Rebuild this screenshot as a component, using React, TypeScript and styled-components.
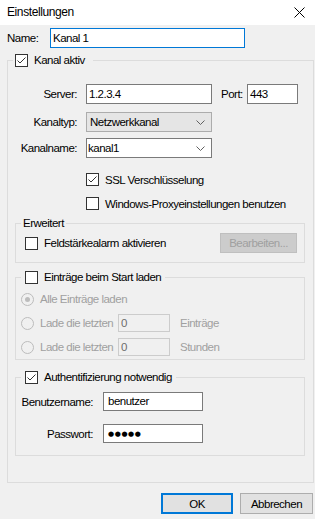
import type { FC, ReactNode } from 'react'
import styled, { createGlobalStyle } from 'styled-components'

const GlobalStyle = createGlobalStyle`
  html, body {
    margin: 0;
    padding: 0;
    background: #f0f0f0;
  }

  body {
    color: #000;
    font-family: 'Liberation Sans', Arial, sans-serif;
    font-size: 11.5px;
    letter-spacing: -0.5px;
  }

  * {
    box-sizing: border-box;
  }
`

const Window = styled.div`
  background: #f0f0f0;
  display: flex;
  flex-direction: column;
  height: 519px;
  overflow: hidden;
  width: 315px;
`

const TitleBar = styled.div`
  align-items: center;
  background: #fff;
  display: flex;
  height: 25px;
  justify-content: space-between;
  padding: 0 10px 1px 7px;
`

const Title = styled.span`
  font-size: 12px;
  letter-spacing: -0.4px;
`

const Body = styled.div`
  display: flex;
  flex-direction: column;
  padding: 3px 1px 0 7px;
`

const Row = styled.div<{ $mt?: number; $pl?: number; $h?: number }>`
  align-items: center;
  display: flex;
  height: ${({ $h }) => $h ?? 20}px;
  margin-top: ${({ $mt }) => $mt ?? 0}px;
  padding-left: ${({ $pl }) => $pl ?? 0}px;
`

const Label = styled.span<{ $w: number; $pl?: number; $pr?: number; $right?: boolean; $disabled?: boolean }>`
  color: ${({ $disabled }) => ($disabled ? '#a0a0a0' : '#000')};
  flex: none;
  padding-left: ${({ $pl }) => $pl ?? 0}px;
  padding-right: ${({ $pr }) => $pr ?? 0}px;
  text-align: ${({ $right }) => ($right ? 'right' : 'left')};
  white-space: nowrap;
  width: ${({ $w }) => $w}px;
`

const TextField = styled.div<{ $w: number; $h?: number; $focused?: boolean; $disabled?: boolean; $pl?: number }>`
  background: ${({ $disabled }) => ($disabled ? '#f0f0f0' : '#fff')};
  border: 1px solid
    ${({ $focused, $disabled }) => ($focused ? '#0078d7' : $disabled ? '#cccccc' : '#7a7a7a')};
  color: ${({ $disabled }) => ($disabled ? '#6d6d6d' : '#000')};
  flex: none;
  height: ${({ $h }) => $h ?? 20}px;
  line-height: ${({ $h }) => ($h ?? 20) - 2}px;
  padding-left: ${({ $pl }) => $pl ?? 2}px;
  white-space: nowrap;
  width: ${({ $w }) => $w}px;
`

const ComboBox = styled.div<{ $editable?: boolean }>`
  align-items: center;
  background: ${({ $editable }) => ($editable ? '#fff' : '#e5e5e5')};
  border: 1px solid ${({ $editable }) => ($editable ? '#7a7a7a' : '#acacac')};
  display: flex;
  flex: none;
  height: 20px;
  justify-content: space-between;
  padding: 0 6px 0 ${({ $editable }) => ($editable ? 1 : 3)}px;
  width: 126px;
`

const Group = styled.fieldset<{ $mt: number; $pad: string }>`
  border: 1px solid #dcdcdc;
  margin: ${({ $mt }) => $mt}px 0 0;
  min-width: 0;
  padding: ${({ $pad }) => $pad};
`

const Legend = styled.legend<{ $ml: number; $pad: string }>`
  height: 15px;
  line-height: 15px;
  margin-left: ${({ $ml }) => $ml}px;
  padding: ${({ $pad }) => $pad};
`

const CheckLabel = styled.span`
  align-items: center;
  display: inline-flex;
  gap: 6px;
  height: 15px;
  white-space: nowrap;
`

const Box = styled.span`
  align-items: center;
  background: #fff;
  border: 1px solid #333;
  display: inline-flex;
  flex: none;
  height: 13px;
  justify-content: center;
  width: 13px;
`

const RadioCircle = styled.span<{ $on?: boolean }>`
  align-items: center;
  background: #f0f0f0;
  border: 1px solid #bcbcbc;
  border-radius: 50%;
  display: inline-flex;
  flex: none;
  height: 13px;
  justify-content: center;
  width: 13px;

  &::after {
    background: #bcbcbc;
    border-radius: 50%;
    content: '';
    display: ${({ $on }) => ($on ? 'block' : 'none')};
    height: 5px;
    width: 5px;
  }
`

const RadioList = styled.div`
  display: flex;
  flex-direction: column;
  gap: 6px;
`

const RadioRow = styled.div`
  align-items: center;
  color: #a0a0a0;
  display: flex;
  gap: 6px;
  height: 18px;
  margin-left: -4px;
  white-space: nowrap;
`

const SpreadRow = styled.div`
  align-items: center;
  display: flex;
  height: 20px;
  justify-content: space-between;
`

const LoginGrid = styled.div`
  align-items: center;
  column-gap: 8px;
  display: grid;
  grid-template-columns: 70px 100px;
  grid-auto-rows: 19px;
  row-gap: 13px;
`

const GridLabel = styled.span`
  justify-self: end;
  padding-right: 2px;
  white-space: nowrap;
`

const Dots = styled.span`
  font-family: 'DejaVu Sans', sans-serif;
  font-size: 7px;
  letter-spacing: 0.6px;
  position: relative;
  top: -1px;
`

const Button = styled.div<{ $w: number; $default?: boolean; $disabled?: boolean }>`
  align-items: center;
  background: ${({ $disabled }) => ($disabled ? '#cccccc' : '#e1e1e1')};
  border: ${({ $default }) => ($default ? '2px solid #0078d7' : '1px solid #adadad')};
  border-color: ${({ $disabled, $default }) => ($disabled ? '#bfbfbf' : $default ? '#0078d7' : '#adadad')};
  color: ${({ $disabled }) => ($disabled ? '#a0a0a0' : '#000')};
  display: flex;
  flex: none;
  height: ${({ $disabled }) => ($disabled ? 20 : 21)}px;
  justify-content: center;
  width: ${({ $w }) => $w}px;
`

const ButtonBar = styled.div`
  display: flex;
  gap: 7px;
  justify-content: flex-end;
  margin-top: 10px;
  padding-right: 1px;
`

const Chevron = () => (
  <svg width="9" height="5" viewBox="0 0 9 5">
    <polyline points="0.5,0.5 4.5,4.5 8.5,0.5" fill="none" stroke="#606060" strokeWidth="1" />
  </svg>
)

const CloseIcon = () => (
  <svg width="11" height="11" viewBox="0 0 11 11">
    <path d="M0.5 0.5 L10.5 10.5 M10.5 0.5 L0.5 10.5" stroke="#000" strokeWidth="1" />
  </svg>
)

const Checkbox: FC<{ checked?: boolean; children: ReactNode }> = ({ checked, children }) => (
  <CheckLabel>
    <Box>
      {checked && (
        <svg width="11" height="11" viewBox="0 0 11 11">
          <polyline points="1.5,5.5 4,8 9.5,2.5" fill="none" stroke="#333" strokeWidth="1" />
        </svg>
      )}
    </Box>
    <span>{children}</span>
  </CheckLabel>
)

const App: FC = () => {
  return (
    <Window>
      <GlobalStyle />
      <TitleBar>
        <Title>Einstellungen</Title>
        <CloseIcon />
      </TitleBar>
      <Body>
        <Row>
          <Label $w={43}>Name:</Label>
          <TextField $w={195} $focused>
            Kanal 1
          </TextField>
        </Row>

        <Group $mt={5} $pad="16px 8px 26px 7px">
          <Legend $ml={-2} $pad="0 8px 0 2px">
            <Checkbox checked>Kanal aktiv</Checkbox>
          </Legend>

          <Row>
            <Label $w={71} $pr={9} $right>
              Server:
            </Label>
            <TextField $w={126}>1.2.3.4</TextField>
            <Label $w={35} $pl={9}>
              Port:
            </Label>
            <TextField $w={51}>443</TextField>
          </Row>
          <Row $mt={8}>
            <Label $w={71} $pr={9} $right>
              Kanaltyp:
            </Label>
            <ComboBox>
              <span>Netzwerkkanal</span>
              <Chevron />
            </ComboBox>
          </Row>
          <Row $mt={6}>
            <Label $w={71} $pr={9} $right>
              Kanalname:
            </Label>
            <ComboBox $editable>
              <span>kanal1</span>
              <Chevron />
            </ComboBox>
          </Row>
          <Row $mt={14} $h={15} $pl={71}>
            <Checkbox checked>SSL Verschlüsselung</Checkbox>
          </Row>
          <Row $mt={9} $h={15} $pl={71}>
            <Checkbox>Windows-Proxyeinstellungen benutzen</Checkbox>
          </Row>

          <Group $mt={5} $pad="2px 7px 9px 9px">
            <Legend $ml={-4} $pad="0 2px">
              Erweitert
            </Legend>
            <SpreadRow>
              <Checkbox>Feldstärkealarm aktivieren</Checkbox>
              <Button $w={77} $disabled>
                Bearbeiten...
              </Button>
            </SpreadRow>
          </Group>

          <Group $mt={7} $pad="5px 7px 3px 9px">
            <Legend $ml={-4} $pad="0 4px">
              <Checkbox>Einträge beim Start laden</Checkbox>
            </Legend>
            <RadioList>
              <RadioRow>
                <RadioCircle $on />
                <span>Alle Einträge laden</span>
              </RadioRow>
              <RadioRow>
                <RadioCircle />
                <Label $w={72} $disabled>
                  Lade die letzten
                </Label>
                <TextField $w={52} $h={18} $disabled>
                  0
                </TextField>
                <Label $w={60} $pl={4} $disabled>
                  Einträge
                </Label>
              </RadioRow>
              <RadioRow>
                <RadioCircle />
                <Label $w={72} $disabled>
                  Lade die letzten
                </Label>
                <TextField $w={52} $h={18} $disabled>
                  0
                </TextField>
                <Label $w={60} $pl={4} $disabled>
                  Stunden
                </Label>
              </RadioRow>
            </RadioList>
          </Group>

          <Group $mt={10} $pad="7px 7px 12px 9px">
            <Legend $ml={-4} $pad="0 4px">
              <Checkbox checked>Authentifizierung notwendig</Checkbox>
            </Legend>
            <LoginGrid>
              <GridLabel>Benutzername:</GridLabel>
              <TextField $w={100} $h={19} $pl={4}>
                benutzer
              </TextField>
              <GridLabel>Passwort:</GridLabel>
              <TextField $w={100} $h={19} $pl={4}>
                <Dots>●●●●●</Dots>
              </TextField>
            </LoginGrid>
          </Group>
        </Group>

        <ButtonBar>
          <Button $w={72} $default>
            OK
          </Button>
          <Button $w={73}>Abbrechen</Button>
        </ButtonBar>
      </Body>
    </Window>
  )
}

export default App
